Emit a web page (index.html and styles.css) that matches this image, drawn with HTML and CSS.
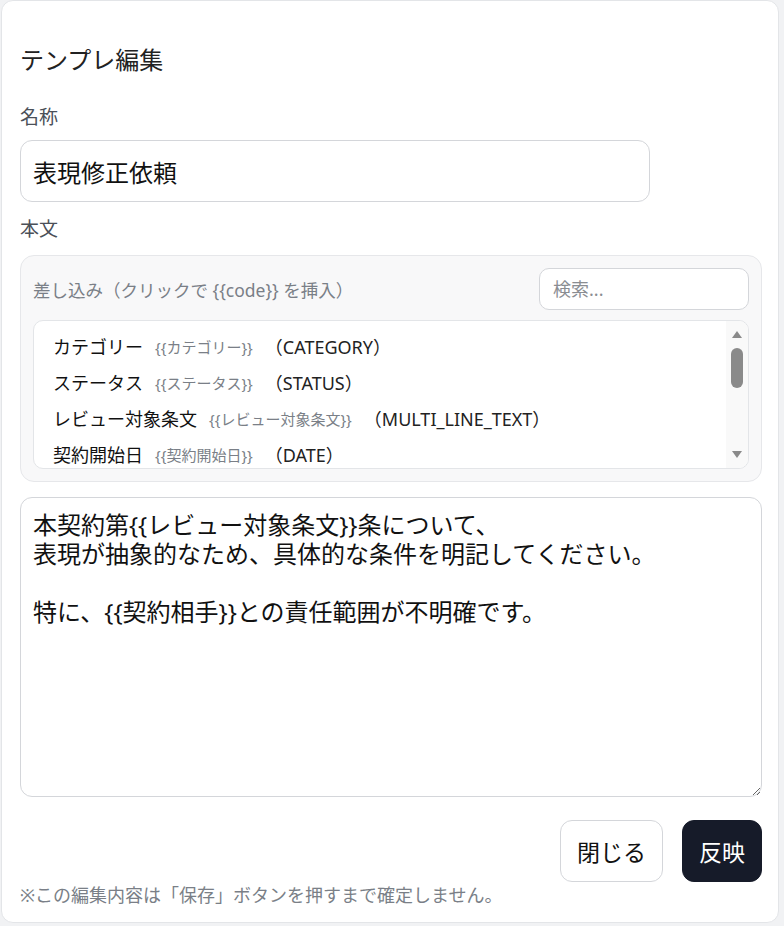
FILE: index.html
```html
<!DOCTYPE html>
<html lang="ja">
<head>
    <meta charset="UTF-8">
    <meta name="viewport" content="width=device-width, initial-scale=1.0">
    <title>テンプレ編集</title>
    <link rel="stylesheet" href="styles.css">
</head>
<body>
    <div class="dialog">
        <h2 class="dialog-title">テンプレ編集</h2>

        <label class="field-label" for="tpl_name">名称</label>
        <input class="name-input" id="tpl_name" type="text" value="表現修正依頼">

        <label class="field-label body-label" for="tpl_body">本文</label>
        <section class="insert-panel">
            <div class="insert-head">
                <span class="insert-hint">差し込み（クリックで {{code}} を挿入）</span>
                <input class="search-input" type="text" placeholder="検索...">
            </div>
            <div class="field-box">
                <ul class="field-list">
                    <li class="field-row"><span class="f-name">カテゴリー</span><span class="f-code">{{カテゴリー}}</span><span class="f-type">（CATEGORY）</span></li>
                    <li class="field-row"><span class="f-name">ステータス</span><span class="f-code">{{ステータス}}</span><span class="f-type">（STATUS）</span></li>
                    <li class="field-row"><span class="f-name">レビュー対象条文</span><span class="f-code">{{レビュー対象条文}}</span><span class="f-type">（MULTI_LINE_TEXT）</span></li>
                    <li class="field-row"><span class="f-name">契約開始日</span><span class="f-code">{{契約開始日}}</span><span class="f-type">（DATE）</span></li>
                </ul>
                <!-- scrollbar drawn by hand, the renderer hides native ones -->
                <div class="scrollbar" aria-hidden="true">
                    <span class="sb-arrow sb-up"></span>
                    <span class="sb-track"><span class="sb-thumb"></span></span>
                    <span class="sb-arrow sb-down"></span>
                </div>
            </div>
        </section>

        <textarea class="body-input" id="tpl_body">本契約第{{レビュー対象条文}}条について、
表現が抽象的なため、具体的な条件を明記してください。

特に、{{契約相手}}との責任範囲が不明確です。</textarea>

        <div class="actions">
            <button class="btn btn-ghost" type="button">閉じる</button>
            <button class="btn btn-dark" type="button">反映</button>
        </div>
        <p class="note">※この編集内容は「保存」ボタンを押すまで確定しません。</p>
    </div>
</body>
</html>
```

FILE: styles.css
```css
*{
    margin: 0;
    padding: 0;
    box-sizing: border-box;
}
body
{
    background-color: #f1f2f4;
    font-family: "Noto Sans", "Noto Sans CJK JP", sans-serif;
    color: #1f2328;
}
.dialog
{
    margin-left: 1px;
    width: 778px;
    height: 923px;
    background-color: #ffffff;
    border: 1px solid #e3e5e8;
    border-radius: 12px;
    padding: 43px 16px 0 18px;
    display: flex;
    flex-direction: column;
}
.dialog-title
{
    font-size: 24px;
    font-weight: 400;
    line-height: 32px;
    color: #222;
}
.field-label
{
    display: block;
    margin-top: 28px;
    font-size: 19px;
    line-height: 26px;
    color: #4b5058;
}
.body-label
{
    margin-top: 14px;
}
.name-input
{
    margin-top: 10px;
    width: 630px;
    height: 62px;
    padding: 0 12px;
    border: 1px solid #d4d6da;
    border-radius: 12px;
    font-family: inherit;
    font-size: 24px;
    color: #111;
    outline: none;
}
.insert-panel
{
    margin-top: 13px;
    background-color: #f8f8f9;
    border: 1px solid #e6e7ea;
    border-radius: 14px;
    padding: 12px;
}
.insert-head
{
    display: flex;
    align-items: center;
    justify-content: space-between;
}
.insert-hint
{
    font-size: 17.5px;
    color: #7a7f87;
}
.search-input
{
    width: 210px;
    height: 42px;
    padding: 0 13px;
    border: 1px solid #d4d6da;
    border-radius: 10px;
    font-family: inherit;
    font-size: 18px;
    background-color: #fff;
    outline: none;
}
.search-input::placeholder
{
    color: #8a8d92;
}
.field-box
{
    margin-top: 10px;
    height: 149px;
    display: flex;
    background-color: #fff;
    border: 1px solid #e3e5e8;
    border-radius: 10px;
    overflow: hidden;
}
.field-list
{
    flex: 1;
    list-style: none;
    overflow: hidden;
    padding: 7px 0 0 19px;
}
.field-row
{
    display: flex;
    align-items: center;
    height: 36px;
    gap: 12px;
    white-space: nowrap;
    cursor: pointer;
}
.f-name
{
    font-size: 18px;
    color: #111;
}
.f-code
{
    font-size: 15px;
    color: #7a7f87;
}
.f-type
{
    font-size: 18px;
    color: #222;
}
.scrollbar
{
    width: 22px;
    background-color: #f9f9f9;
    display: flex;
    flex-direction: column;
    align-items: center;
    padding: 10px 0;
}
.sb-arrow
{
    width: 0;
    height: 0;
    border-left: 5px solid transparent;
    border-right: 5px solid transparent;
}
.sb-up
{
    border-bottom: 7px solid #8a8a8a;
}
.sb-down
{
    border-top: 7px solid #8a8a8a;
}
.sb-track
{
    flex: 1;
    padding-top: 10px;
}
.sb-thumb
{
    display: block;
    width: 12px;
    height: 40px;
    border-radius: 6px;
    background-color: #8a8a8a;
}
.body-input
{
    margin-top: 15px;
    width: 100%;
    height: 300px;
    padding: 12px 12px;
    border: 1px solid #d4d6da;
    border-radius: 12px;
    font-family: inherit;
    font-size: 24px;
    line-height: 29px;
    color: #111;
    resize: vertical;
    outline: none;
}
.actions
{
    margin-top: 23px;
    display: flex;
    justify-content: flex-end;
    gap: 19px;
}
.btn
{
    height: 62px;
    padding: 0 16px;
    border-radius: 12px;
    font-family: inherit;
    font-size: 23px;
    cursor: pointer;
}
.btn-ghost
{
    background-color: #fff;
    border: 1px solid #d4d6da;
    color: #111;
}
.btn-dark
{
    background-color: #161b29;
    border: 1px solid #161b29;
    color: #fff;
}
.note
{
    margin-top: 1px;
    font-size: 18px;
    line-height: 24px;
    color: #7a7f87;
}
```
